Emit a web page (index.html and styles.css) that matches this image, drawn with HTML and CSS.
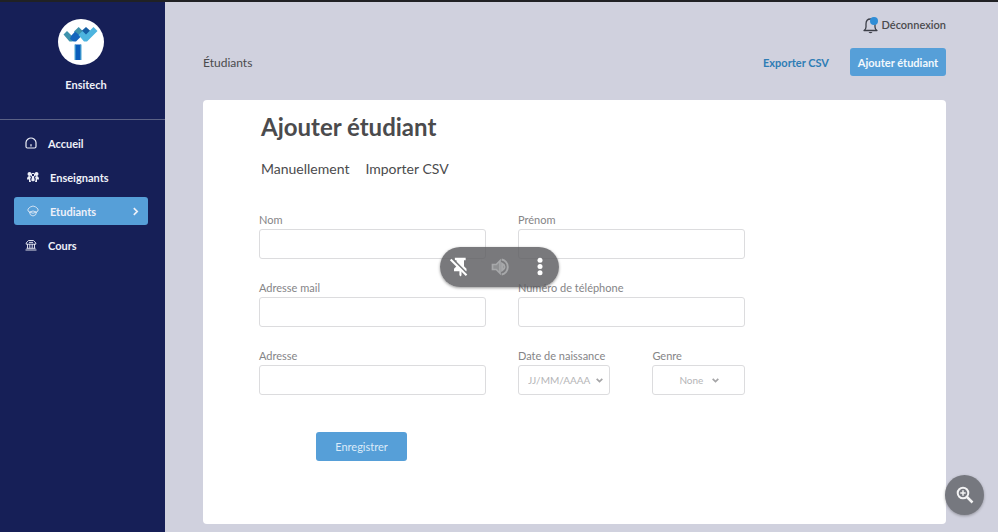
FILE: index.html
```html
<!DOCTYPE html>
<html lang="fr">
<head>
<meta charset="utf-8">
<meta name="viewport" content="width=device-width, initial-scale=1">
<title>Ensitech – Ajouter étudiant</title>
<link rel="stylesheet" href="styles.css">
</head>
<body>
<div class="app">
  <aside class="sidebar">
    <div class="brand">
      <span class="brand-logo">
        <svg viewBox="0 0 46 46" aria-hidden="true">
          <path d="M5.500 15.500L9 12l4.500 4.500L17 20l-2.500 2.500h-3z" fill="#3f93ad"/>
          <path d="M16 12.500L20.700 8l5 5-4.700 4.500z" fill="#3f93ad"/>
          <path d="M23.500 12L28 8l5 4.500-5 5z" fill="#155fa5"/>
          <path d="M13 17l4-4.500 6 5-5 5h-2.500L12 20z" fill="#1565bd"/>
          <path d="M20.500 16l4-4 3.500 3.500L35.500 8l4 4L29 22.500h-3z" fill="#4db4df"/>
          <path d="M17 25.500h6v15.500h-6z" fill="#0a5dbb"/>
          <path d="M16.500 25.500h1.200V41h-1.200zM22.300 25.500h1.200V41h-1.200z" fill="#49a4d2"/>
        </svg>
      </span>
      <span class="brand-name">Ensitech</span>
    </div>
    <nav class="nav">
      <a class="nav-link" href="#accueil">
        <svg class="nav-icon" viewBox="0 0 12 12" aria-hidden="true"><path d="M1 5.500C1 3 4 1 6 1s5 2 5 4.500V9.500Q11 11 9.500 11h-7Q1 11 1 9.500zM6 7.500V9" fill="none" stroke="currentColor" stroke-width="1.200" stroke-linecap="round"/></svg>
        Accueil
      </a>
      <a class="nav-link nav-link-inset" href="#enseignants">
        <svg class="nav-icon" viewBox="0 0 12 12" aria-hidden="true"><circle cx="2.500" cy="3" r="2" fill="currentColor"/><circle cx="9.500" cy="3" r="2" fill="currentColor"/><path d="M0 8.500Q0 5 2.500 5L4 6 3.200 8 4 11H2L2 8.500zM12 8.500Q12 5 9.500 5L8 6l.8 2L8 11h2V8.500zM5 6h2l.8 3.500L6 10.500 4.200 9.500z" fill="currentColor"/><circle cx="6" cy="4" r="1.700" fill="none" stroke="currentColor"/></svg>
        Enseignants
      </a>
      <a class="nav-link nav-link-inset nav-link-active" href="#etudiants" aria-current="page">
        <svg class="nav-icon" viewBox="0 0 12 12" aria-hidden="true"><path d="M1 4Q3 1.500 6 1q3 .5 5 3v2L9.500 7Q6 5 2.500 7L1 6zM2.500 7q0 3.500 3.500 4 3.500-.5 3.500-4M2.500 7Q6 9.500 9.500 7" fill="none" stroke="currentColor" stroke-width=".8" stroke-linejoin="round"/></svg>
        Etudiants
        <svg class="nav-chevron" viewBox="0 0 8 8" aria-hidden="true"><path d="M2.500 1l3 3-3 3" fill="none" stroke="currentColor" stroke-width="1.500"/></svg>
      </a>
      <a class="nav-link" href="#cours">
        <svg class="nav-icon" viewBox="0 0 12 12" aria-hidden="true"><path d="M1.200 5.200V4L3.500 1.500h5L10.800 4v1.200zM.5 11h11M1.500 9.300h9M2.500 5v4.300M4.800 5v4.300M7.200 5v4.300M9.500 5v4.300M4 3.400h4" fill="none" stroke="currentColor" stroke-width=".9"/></svg>
        Cours
      </a>
    </nav>
  </aside>

  <main class="main">
    <header class="topbar">
      <a class="logout" href="#deconnexion">
        <svg class="bell" viewBox="0 0 18 18" aria-hidden="true"><path d="M2 14.500q2-1 2-3.500V8Q4 3 8.500 3T13 8v3q0 2.500 2 3.500z" fill="none" stroke="#3c3f48" stroke-width="1.300" stroke-linejoin="round"/><path d="M6.500 16h4q-2 2.500-4 0z" fill="#3c3f48"/><circle cx="12" cy="5" r="4" fill="#2f8dd6"/></svg>
        Déconnexion
      </a>
    </header>
    <div class="toolbar">
      <span class="crumb">Étudiants</span>
      <a class="export" href="#export">Exporter CSV</a>
      <button class="button button-strong" type="button">Ajouter étudiant</button>
    </div>

    <section class="card">
      <h1 class="title">Ajouter étudiant</h1>
      <nav class="tabs">
        <a class="tab" href="#manuel">Manuellement</a>
        <a class="tab" href="#import">Importer CSV</a>
      </nav>
      <form class="form">
        <div class="field"><label for="nom">Nom</label><input id="nom" type="text"></div>
        <div class="field"><label for="prenom">Prénom</label><input id="prenom" type="text"></div>
        <div class="field"><label for="mail">Adresse mail</label><input id="mail" type="email"></div>
        <div class="field"><label for="tel">Numéro de téléphone</label><input id="tel" type="tel"></div>
        <div class="field"><label for="adresse">Adresse</label><input id="adresse" type="text"></div>
        <div class="pair">
          <div class="field">
            <label for="naissance">Date de naissance</label>
            <div class="select-box">
              <select id="naissance" class="select"><option>JJ/MM/AAAA</option></select>
              <svg class="caret" viewBox="0 0 8 8" aria-hidden="true"><path d="M1.500 2.500L4 5l2.500-2.500" fill="none" stroke="currentColor" stroke-width="1.500"/></svg>
            </div>
          </div>
          <div class="field">
            <label for="genre">Genre</label>
            <div class="select-box select-box-wide">
              <select id="genre" class="select"><option>None</option></select>
              <svg class="caret" viewBox="0 0 8 8" aria-hidden="true"><path d="M1.500 2.500L4 5l2.500-2.500" fill="none" stroke="currentColor" stroke-width="1.500"/></svg>
            </div>
          </div>
        </div>
        <div class="actions"><button class="button button-submit" type="submit">Enregistrer</button></div>
      </form>
    </section>
  </main>
</div>

<div class="media-bar">
  <button class="media-button" type="button" aria-label="Détacher">
    <svg viewBox="0 0 24 24" aria-hidden="true"><path d="M7 1h13v3h-2v7l3 3v3h-6v5l-1 1.500-1.500-1.500v-5H6v-3l3-3V4H7z" fill="#fff"/><path d="M4 2l20 20" stroke="#77797b" stroke-width="2"/><path d="M2 3l19 19" stroke="#fff" stroke-width="2.500"/></svg>
  </button>
  <button class="media-button" type="button" aria-label="Son">
    <svg viewBox="0 0 24 24" aria-hidden="true"><path d="M3 9h4.500L12 4.500v15L7.500 15H3z" fill="#8f9092" stroke="#a7a8aa" stroke-width="2"/><path d="M14 3a9.200 9.200 0 010 18M14.500 8q3 1.500 3 4t-3 4z" fill="none" stroke="#a7a8aa" stroke-width="2.400"/></svg>
  </button>
  <button class="media-button" type="button" aria-label="Plus">
    <svg viewBox="0 0 24 24" aria-hidden="true"><g fill="#fff"><circle cx="12" cy="4" r="3"/><circle cx="12" cy="11.500" r="3"/><circle cx="12" cy="19" r="3"/></g></svg>
  </button>
</div>
<button class="zoom-button" type="button" aria-label="Zoom avant">
  <svg viewBox="0 0 18 18" aria-hidden="true"><circle cx="7" cy="7" r="5.300" fill="none" stroke="#f3f3f4" stroke-width="2"/><path d="M11 11l5.500 5.500" stroke="#f3f3f4" stroke-width="2.500"/><path d="M7 4.300v5.400M4.300 7h5.400" stroke="#f3f3f4" stroke-width="1.500"/></svg>
</button>
</body>
</html>
```
FILE: styles.css
```css
* { box-sizing: border-box; }

body {
  margin: 0;
  background: #d0d1de;
  color: #4b4b4d;
  font-family: Lato, "Open Sans", sans-serif;
  font-size: 11px;
}

a { color: inherit; text-decoration: none; }
button, input, select { font: inherit; }
button { border: 0; padding: 0; cursor: pointer; }
svg { display: block; }

.app {
  display: flex;
  min-height: 100vh;
  border-top: 2px solid #202124;
}

.sidebar {
  flex: none;
  width: 165px;
  background: #161f57;
  color: #eef0f8;
  font-weight: 700;
}

.brand {
  display: flex;
  flex-direction: column;
  align-items: center;
  gap: 12px;
  height: 118px;
  padding: 17px 3px 0 0;
  border-bottom: 1px solid #5b6185;
}

.brand-logo {
  width: 46px;
  height: 46px;
  border-radius: 50%;
  background: #fff;
}

.brand-name { padding-left: 10px; line-height: 16px; }

.nav {
  display: flex;
  flex-direction: column;
  gap: 6px;
  padding: 9px 17px 0 14px;
}

.nav-link {
  display: flex;
  align-items: center;
  gap: 11px;
  height: 28px;
  padding: 0 8px 0 11px;
  border-radius: 3px;
}

.nav-link-inset { padding-left: 13px; }
.nav-link-active { background: #569fd8; }
.nav-icon { width: 12px; height: 12px; }
.nav-chevron { width: 9px; height: 9px; margin-left: auto; }

.main {
  flex: 1;
  display: flex;
  flex-direction: column;
  padding: 14px 52px 8px 38px;
}

.topbar { display: flex; justify-content: flex-end; }

.logout {
  display: flex;
  align-items: center;
  gap: 2px;
  height: 18px;
  font-weight: 600;
  line-height: 18px;
}

.bell { width: 18px; height: 18px; }

.toolbar {
  display: flex;
  align-items: center;
  gap: 21px;
  margin: 14px 0 24px;
}

.crumb { flex: 1; font-size: 12px; }
.export { color: #2e7db5; font-weight: 700; }

.button {
  height: 28px;
  border-radius: 3px;
  background: #569fd8;
  color: #f2f8fd;
}

.button-strong { width: 96px; font-weight: 700; }
.button-submit { width: 91px; height: 29px; color: #dcebf8; }

.card {
  flex: 1;
  padding: 12px 56px 62px;
  border-radius: 4px;
  background: #fff;
}

.title { margin: 0 2px; font-size: 24px; line-height: 30px; font-weight: 700; }

.tabs {
  display: flex;
  gap: 16px;
  margin: 17px 2px 34px;
  font-size: 14px;
  line-height: 20px;
}

.form {
  display: grid;
  grid-template-columns: 1fr 1fr;
  gap: 22px 32px;
  width: 77%;
}

.field { display: flex; flex-direction: column; color: #858587; }
.field label { height: 16px; line-height: 14px; }

.field input,
.select {
  width: 100%;
  height: 30px;
  border: 1px solid #dcdcde;
  border-radius: 3px;
  background: #fff;
}

.pair { display: grid; grid-template-columns: 1fr 1fr; gap: 42px; }

.select-box { position: relative; color: #b5b5b7; font-size: 10px; }

.select {
  display: block;
  appearance: none;
  padding: 0 9px;
  color: inherit;
}

.select-box-wide .select { padding-left: 26px; }

.caret {
  position: absolute;
  top: 11px;
  right: 6px;
  width: 9px;
  height: 9px;
  color: #a5a5a7;
  pointer-events: none;
}

.select-box-wide .caret { right: 25px; }

.actions { padding: 15px 0 0 57px; }

.media-bar {
  position: fixed;
  top: 247px;
  left: calc(50% - 59px);
  display: flex;
  align-items: center;
  justify-content: space-between;
  width: 119px;
  height: 40px;
  padding: 0 9px;
  border-radius: 20px;
  background: rgba(91, 92, 95, 0.82);
  box-shadow: 0 1px 3px rgba(0, 0, 0, 0.4);
}

.media-button { width: 20px; height: 20px; background: none; }

.zoom-button {
  position: fixed;
  right: 14px;
  bottom: 17px;
  display: grid;
  place-items: center;
  width: 39px;
  height: 40px;
  border-radius: 50%;
  background: #76787f;
  box-shadow: 0 1px 3px rgba(0, 0, 0, 0.3);
}

.zoom-button svg { width: 18px; height: 18px; }
```
